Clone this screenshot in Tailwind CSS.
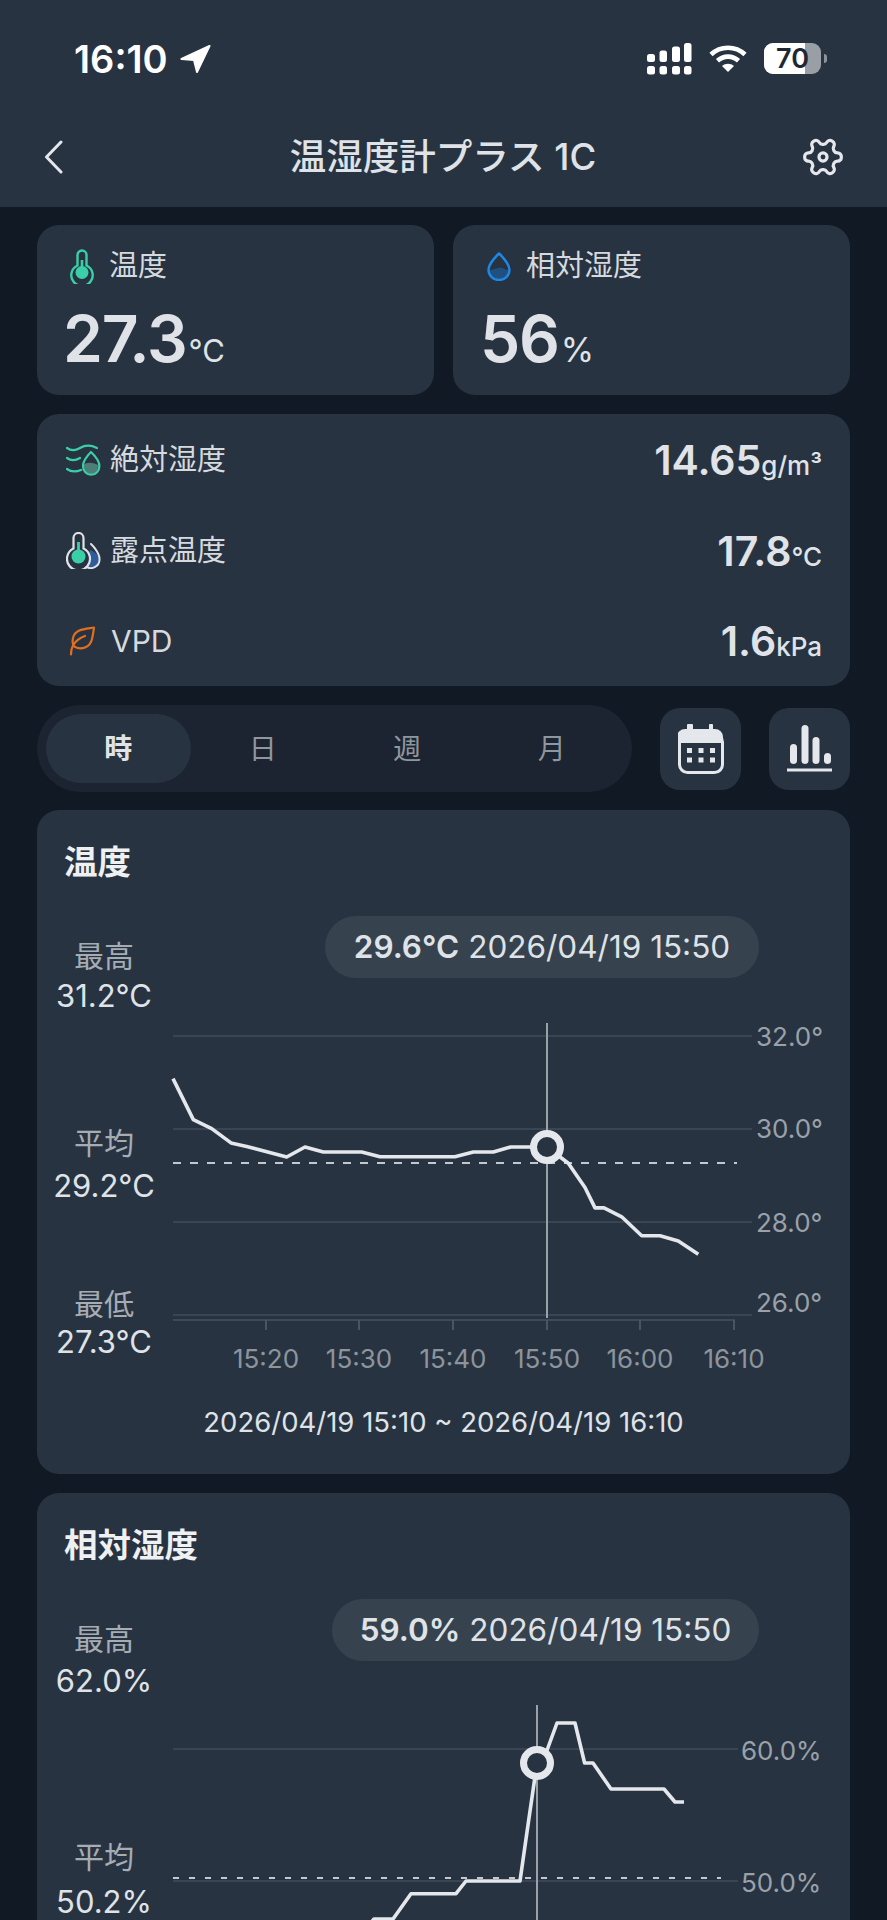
<!DOCTYPE html>
<html lang="ja">
<head>
  <meta charset="UTF-8" />
  <meta name="viewport" content="width=device-width, initial-scale=1.0" />
  <title>温湿度計プラス 1C</title>
  <script src="https://cdn.jsdelivr.net/npm/@tailwindcss/browser@4"></script>
</head>
<body class="bg-[#111a24]">
  <div class="w-[887px] h-[1920px] overflow-hidden font-['Inter','Noto_Sans_CJK_JP',sans-serif] text-[#e4e7eb]">

    <!-- status bar + nav -->
    <header class="h-[207px] bg-[#283342]">
      <div class="h-[118px] flex items-start pt-[43px] pl-[74px] pr-[60px]">
        <span class="text-[38px] leading-[32px] font-semibold text-white">16:10</span>
        <svg class="ml-[12px] mt-[2px]" width="31" height="28" viewBox="0 0 31 28"><path d="M29.500 1 L1.500 14 L14 15 L17 27 Z" fill="#fff" stroke="#fff" stroke-width="2" stroke-linejoin="round"/></svg>
        <svg class="ml-auto" width="45" height="32" viewBox="0 0 45 32" fill="#fff">
          <rect x="0" y="11" width="8" height="8" rx="2.5"/><rect x="12.5" y="7.5" width="7.5" height="11.5" rx="2.5"/><rect x="25" y="3.5" width="8" height="15.5" rx="2.5"/><rect x="37" y="0" width="7.5" height="19" rx="2.5"/>
          <rect x="0" y="23" width="8" height="8.5" rx="2.5"/><rect x="12.5" y="23" width="7.5" height="8.5" rx="2.5"/><rect x="25" y="23" width="8" height="8.5" rx="2.5"/><rect x="37" y="23" width="7.5" height="8.5" rx="2.5"/>
        </svg>
        <svg class="ml-[17px] mt-[2px]" width="38" height="27" viewBox="0 0 38 27" fill="none" stroke="#fff" stroke-width="4.6">
          <path d="M2 9.5 C11.5 0.5 26.5 0.5 36 9.5"/><path d="M8.5 15.8 C14.5 10.2 23.5 10.2 29.5 15.8"/>
          <path d="M19 27 L13 21 C16.5 18 21.5 18 25 21 Z" fill="#fff" stroke="none"/>
        </svg>
        <div class="ml-[17px] w-[58px] h-[31px] relative flex items-center">
          <div class="w-[57px] h-[31px] rounded-[9px] overflow-hidden flex bg-[#9a9ea5]">
            <div class="w-[41px] h-full bg-white"></div>
          </div>
          <span class="absolute left-[12px] top-0 w-[30px] text-center text-[27px] leading-[31px] font-semibold text-[#1f2733]">70</span>
        </div>
        <div class="ml-[2px] mt-[11px] w-[3px] h-[9px] rounded-r-full bg-[#8d939b]"></div>
      </div>
      <div class="flex items-center h-[78px] pl-[44px] pr-[44px]">
        <svg width="19" height="34" viewBox="0 0 19 34" fill="none" stroke="#e4e7eb" stroke-width="3" stroke-linecap="round" stroke-linejoin="round"><path d="M17 2 L2.5 17 L17 32"/></svg>
        <h1 class="flex-1 text-center text-[36.5px] leading-[44px] font-medium text-[#dfe3e7] pl-[22px]">温湿度計プラス 1C</h1>
        <svg width="44" height="44" viewBox="0 0 24 24" fill="none" stroke="#e4e7eb" stroke-width="1.75" stroke-linecap="round" stroke-linejoin="round" class="-mr-[2px] rotate-90"><path d="M12.22 2h-.44a2 2 0 0 0-2 2v.18a2 2 0 0 1-1 1.73l-.43.25a2 2 0 0 1-2 0l-.15-.08a2 2 0 0 0-2.73.73l-.22.38a2 2 0 0 0 .73 2.73l.15.1a2 2 0 0 1 1 1.72v.51a2 2 0 0 1-1 1.74l-.15.09a2 2 0 0 0-.73 2.73l.22.38a2 2 0 0 0 2.73.73l.15-.08a2 2 0 0 1 2 0l.43.25a2 2 0 0 1 1 1.73V20a2 2 0 0 0 2 2h.44a2 2 0 0 0 2-2v-.18a2 2 0 0 1 1-1.73l.43-.25a2 2 0 0 1 2 0l.15.08a2 2 0 0 0 2.73-.73l.22-.39a2 2 0 0 0-.73-2.73l-.15-.08a2 2 0 0 1-1-1.74v-.5a2 2 0 0 1 1-1.74l.15-.09a2 2 0 0 0 .73-2.73l-.22-.38a2 2 0 0 0-2.73-.73l-.15.08a2 2 0 0 1-2 0l-.43-.25a2 2 0 0 1-1-1.73V4a2 2 0 0 0-2-2z"/><circle cx="12" cy="12" r="2.2"/></svg>
      </div>
    </header>

    <main class="px-[37px] pt-[18px] flex flex-col">
      <!-- top cards -->
      <div class="flex gap-[19px]">
        <section class="w-[397px] h-[170px] rounded-[22px] bg-[#283342] pl-[29px] pt-[23px]">
          <div class="flex items-center h-[36px]">
            <svg class="ml-[4px]" width="24" height="35" viewBox="0 0 24 35" fill="none"><path d="M7.5 16.5 V6 a4.5 4.5 0 0 1 9 0 V16.5 A10.7 10.7 0 1 1 7.5 16.5 Z" stroke="#3bcfa8" stroke-width="2.4"/><circle cx="12" cy="23.5" r="6.5" fill="#3bcfa8"/><path d="M12 11 V20" stroke="#3bcfa8" stroke-width="2.6"/></svg>
            <span class="ml-[15px] text-[29px] leading-[36px] text-[#d6dade]">温度</span>
          </div>
          <div class="flex items-baseline mt-[19px] -ml-[3px]">
            <span class="text-[64px] leading-[72px] font-semibold tracking-[-1.2px] text-[#dfe2e6]">27.3</span>
            <span class="ml-[2px] text-[31px] leading-[36px] text-[#dfe3e7]">°C</span>
          </div>
        </section>
        <section class="w-[397px] h-[170px] rounded-[22px] bg-[#283342] pl-[30px] pt-[23px]">
          <div class="flex items-center h-[36px]">
            <svg class="ml-[4px]" width="24" height="29" viewBox="0 0 24 29" fill="none"><path d="M2 18.5 C8 17 12 15 15 16 C18 17 20 19 22 17 C21 24 17 28 12 28 C6 28 2 24 2 18.5 Z" fill="#20507f"/><path d="M12 1.5 C12 1.5 1.5 11 1.5 18 a10.5 10 0 0 0 21 0 C22.5 11 12 1.5 12 1.5 Z" stroke="#1e88e5" stroke-width="2.4" stroke-linejoin="round"/></svg>
            <span class="ml-[15px] text-[29px] leading-[36px] text-[#d6dade]">相対湿度</span>
          </div>
          <div class="flex items-baseline mt-[19px] -ml-[3px]">
            <span class="text-[64px] leading-[72px] font-semibold tracking-[-1.2px] text-[#dfe2e6]">56</span>
            <span class="ml-[2px] text-[34px] leading-[36px] text-[#dfe3e7]">%</span>
          </div>
        </section>
      </div>

      <!-- detail rows -->
      <section class="mt-[19px] h-[272px] rounded-[22px] bg-[#283342] pl-[29px] pr-[28px] flex flex-col">
        <div class="h-[91px] flex items-center">
          <svg width="35" height="33" viewBox="0 0 35 33" fill="none" stroke="#3bcfa8" stroke-width="2.2" stroke-linecap="round">
            <path d="M1 5 C5 8 9 8 14 5 C19 2 25 2 31 5"/><path d="M1 15 C5 18 9 18 14 15"/><path d="M1 26 C5 29 10 29 15 27"/>
            <path d="M18 22 C20 19 26 19 32 22 C32 28 29 31 25 31 C21 31 18 27 18 22 Z" fill="#4d7f78" stroke="none"/>
            <path d="M25 9 C25 9 17 17 17 23 a8.2 8.7 0 0 0 16.4 0 C33.4 17 25 9 25 9 Z" stroke-linejoin="round"/>
          </svg>
          <span class="ml-[9px] text-[29px] leading-[36px] text-[#d6dade]">絶対湿度</span>
          <span class="ml-auto flex items-baseline"><span class="text-[41px] leading-[46px] font-semibold text-[#e0e3e7]">14.65</span><span class="text-[26px] leading-[30px] font-medium text-[#dfe3e7]">g/m³</span></span>
        </div>
        <div class="h-[91px] flex items-center">
          <svg width="35" height="37" viewBox="0 0 35 37" fill="none">
            <path d="M24 18 C27 19 33 22 33 28 C33 33 29 36 25 36 C22 36 20 35 19 33 L24 18 Z" fill="#2f5c9a"/>
            <path d="M25 12 C25 12 33.5 20 33.5 27 a8.5 8.7 0 0 1 -14 7" stroke="#dfe3e7" stroke-width="2" stroke-linecap="round"/>
            <path d="M7.5 16.5 V6 a5 5 0 0 1 10 0 V16.5 A11.5 11.5 0 1 1 7.5 16.5 Z" fill="#283342" stroke="#dfe3e7" stroke-width="2.2"/>
            <circle cx="12.5" cy="24.5" r="7" fill="#3bcfa8"/><path d="M12.5 10 V20" stroke="#3bcfa8" stroke-width="2.8"/>
          </svg>
          <span class="ml-[9px] text-[29px] leading-[36px] text-[#d6dade]">露点温度</span>
          <span class="ml-auto flex items-baseline"><span class="text-[41px] leading-[46px] font-semibold text-[#e0e3e7]">17.8</span><span class="text-[26px] leading-[30px] font-medium text-[#dfe3e7]">°C</span></span>
        </div>
        <div class="h-[90px] flex items-center">
          <svg class="ml-[3px]" width="27" height="30" viewBox="0 0 27 30" fill="none" stroke="#e0701f" stroke-width="2.2" stroke-linecap="round" stroke-linejoin="round">
            <path d="M25 1.5 C16 3 6 3 4 12 C3 16 4 20 6 21 C12 24 21 22 23 13 C24 9 24.5 5 25 1.5 Z"/><path d="M2 28.5 C2 22 5 14 16 10"/>
          </svg>
          <span class="ml-[15px] text-[30px] leading-[36px] text-[#d6dade]">VPD</span>
          <span class="ml-auto flex items-baseline"><span class="text-[41px] leading-[46px] font-semibold text-[#e0e3e7]">1.6</span><span class="text-[26px] leading-[30px] font-medium text-[#dfe3e7]">kPa</span></span>
        </div>
      </section>

      <!-- range tabs -->
      <div class="mt-[19px] h-[87px] flex items-center">
        <div class="w-[595px] h-[87px] rounded-full bg-[#1b2430] p-[9px] pr-[8px] grid grid-cols-4">
          <div class="rounded-full bg-[#283342] flex items-center justify-center text-[28px] font-semibold text-[#dfe3e7]">時</div>
          <div class="flex items-center justify-center text-[28px] text-[#8f969f]">日</div>
          <div class="flex items-center justify-center text-[28px] text-[#8f969f]">週</div>
          <div class="flex items-center justify-center text-[28px] text-[#8f969f]">月</div>
        </div>
        <button class="ml-[28px] w-[81px] h-[82px] rounded-[20px] bg-[#283342] flex items-center justify-center">
          <svg width="46" height="50" viewBox="0 0 46 50">
            <path d="M12 0 h2 a1 1 0 0 1 1 1 v4 h16 v-4 a1 1 0 0 1 1 -1 h2 a1 1 0 0 1 1 1 v4 h2 a8 8 0 0 1 8 8 v6 h-46 v-6 a8 8 0 0 1 8 -8 h2 v-4 a1 1 0 0 1 1 -1 Z" fill="#e4e7eb"/>
            <rect x="1.5" y="10" width="43" height="38.5" rx="8" fill="none" stroke="#e4e7eb" stroke-width="3"/>
            <g fill="#e4e7eb"><rect x="9" y="24" width="5" height="5"/><rect x="20.500" y="24" width="5" height="5"/><rect x="32" y="24" width="5" height="5"/><rect x="9" y="33.500" width="5" height="5"/><rect x="20.500" y="33.500" width="5" height="5"/><rect x="32" y="33.500" width="5" height="5"/></g>
          </svg>
        </button>
        <button class="ml-[28px] w-[81px] h-[82px] rounded-[20px] bg-[#283342] flex items-center justify-center">
          <svg width="45" height="47" viewBox="0 0 45 47" fill="#e4e7eb">
            <rect x="3" y="19" width="7" height="20" rx="3.500"/><rect x="14.500" y="0" width="7" height="39" rx="3.500"/><rect x="25.500" y="12" width="7" height="27" rx="3.500"/><rect x="37" y="28" width="7" height="11" rx="3.500"/><rect x="0" y="43.500" width="45" height="3"/>
          </svg>
        </button>
      </div>

      <!-- temperature chart -->
      <section class="mt-[18px] h-[664px] rounded-[22px] bg-[#283342] pt-[32px]">
        <h2 class="pl-[27px] text-[33.5px] leading-[40px] font-semibold text-[#eef0f2]">温度</h2>
        <div class="mt-[34px] flex">
          <div class="w-[134px] shrink-0 text-center">
            <div class="pt-[20px]"><p class="text-[30px] leading-[40px] text-[#a6acb3]">最高</p><p class="text-[31px] leading-[40px] text-[#dfe3e7]">31.2°C</p></div>
            <div class="mt-[107px]"><p class="text-[30px] leading-[40px] text-[#a6acb3]">平均</p><p class="text-[31px] leading-[46px] text-[#dfe3e7]">29.2°C</p></div>
            <div class="mt-[75px]"><p class="text-[30px] leading-[40px] text-[#a6acb3]">最低</p><p class="text-[31px] leading-[36px] text-[#dfe3e7]">27.3°C</p></div>
          </div>
          <div class="flex-1">
            <div class="ml-[154px] w-[434px] h-[62px] rounded-full bg-[#37424f] flex items-center justify-center gap-[9px] text-[31.5px] text-[#dfe3e7]"><b class="font-semibold">29.6°C</b><span>2026/04/19 15:50</span></div>
            <svg class="mt-[32px] block" width="679" height="370" viewBox="171 1010 679 370">
              <g stroke="#3a4553" stroke-width="2">
                <path d="M173 1036 H752 M173 1129 H752 M173 1222 H752 M173 1315 H752"/>
                <path d="M173 1320 H735" stroke="#3f4a58"/>
                <path d="M266 1320 V1330 M359 1320 V1330 M453 1320 V1330 M547 1320 V1330 M640 1320 V1330 M734 1320 V1330" stroke="#4a5563"/>
              </g>
              <path d="M173 1163 H737" stroke="#c3c8cd" stroke-width="2" stroke-dasharray="8 9" fill="none"/>
              <path d="M547 1023 V1318" stroke="#9aa1a9" stroke-width="2"/>
              <polyline fill="none" stroke="#e4e7eb" stroke-width="3.6" stroke-linejoin="round" points="173,1078.6 193.300,1119.600 211.700,1128.600 231,1142.900 246.700,1146.400 286.700,1157 305,1147 323.300,1152 361.700,1152 380,1156.800 455,1156.800 473.300,1152 493.300,1152 510.700,1147 547,1147 568.300,1163.200 585,1187.500 595,1207.900 604,1207.900 621.700,1216.800 641.700,1235.700 660,1235.700 678.300,1241 698.300,1254.300"/>
              <circle cx="547" cy="1147" r="13.500" fill="#283342" stroke="#e4e7eb" stroke-width="7"/>
              <g fill="#9aa1a9" font-size="26">
                <text x="756" y="1045.500">32.0°</text><text x="756" y="1138">30.0°</text><text x="756" y="1231.500">28.0°</text><text x="756" y="1311.500">26.0°</text>
              </g>
              <g fill="#8d949c" font-size="26" text-anchor="middle">
                <text x="266" y="1367.500">15:20</text><text x="359" y="1367.500">15:30</text><text x="453" y="1367.500">15:40</text><text x="547" y="1367.500">15:50</text><text x="640" y="1367.500">16:00</text><text x="734" y="1367.500">16:10</text>
              </g>
            </svg>
          </div>
        </div>
        <p class="mt-[22px] text-center text-[27.5px] leading-[40px] text-[#dfe3e7]">2026/04/19 15:10 ~ 2026/04/19 16:10</p>
      </section>

      <!-- humidity chart -->
      <section class="mt-[19px] h-[664px] rounded-[22px] bg-[#283342] pt-[32px]">
        <h2 class="pl-[27px] text-[33.5px] leading-[40px] font-semibold text-[#eef0f2]">相対湿度</h2>
        <div class="mt-[34px] flex">
          <div class="w-[134px] shrink-0 text-center">
            <div class="pt-[20px]"><p class="text-[30px] leading-[40px] text-[#a6acb3]">最高</p><p class="text-[31px] leading-[44px] text-[#dfe3e7]">62.0%</p></div>
            <div class="mt-[134px]"><p class="text-[30px] leading-[40px] text-[#a6acb3]">平均</p><p class="text-[31px] leading-[50px] text-[#dfe3e7]">50.2%</p></div>
          </div>
          <div class="flex-1">
            <div class="ml-[161px] w-[427px] h-[62px] rounded-full bg-[#37424f] flex items-center justify-center gap-[9px] text-[31.5px] text-[#dfe3e7]"><b class="font-semibold">59.0%</b><span>2026/04/19 15:50</span></div>
            <svg class="mt-[32px] block" width="679" height="370" viewBox="171 1693 679 370">
              <path d="M173 1749 H738 M173 1881 H738" stroke="#3a4553" stroke-width="2"/>
              <path d="M173 1878 H721" stroke="#c3c8cd" stroke-width="2" stroke-dasharray="6 10" fill="none"/>
              <path d="M537 1705 V2000" stroke="#9aa1a9" stroke-width="2"/>
              <polyline fill="none" stroke="#e4e7eb" stroke-width="3.6" stroke-linejoin="round" points="340,1960 374,1919 393,1919 411,1893.700 456,1893.700 466,1881 520,1881 528,1825 537,1763 546,1753 557,1723 575,1723 584.600,1763 593,1763 611,1789 664,1789 675,1802 684,1802"/>
              <circle cx="537" cy="1763" r="13.500" fill="#283342" stroke="#e4e7eb" stroke-width="7"/>
              <g fill="#9aa1a9" font-size="26">
                <text x="741" y="1759.500">60.0%</text><text x="741" y="1891.500">50.0%</text>
              </g>
            </svg>
          </div>
        </div>
      </section>
    </main>
  </div>
</body>
</html>
